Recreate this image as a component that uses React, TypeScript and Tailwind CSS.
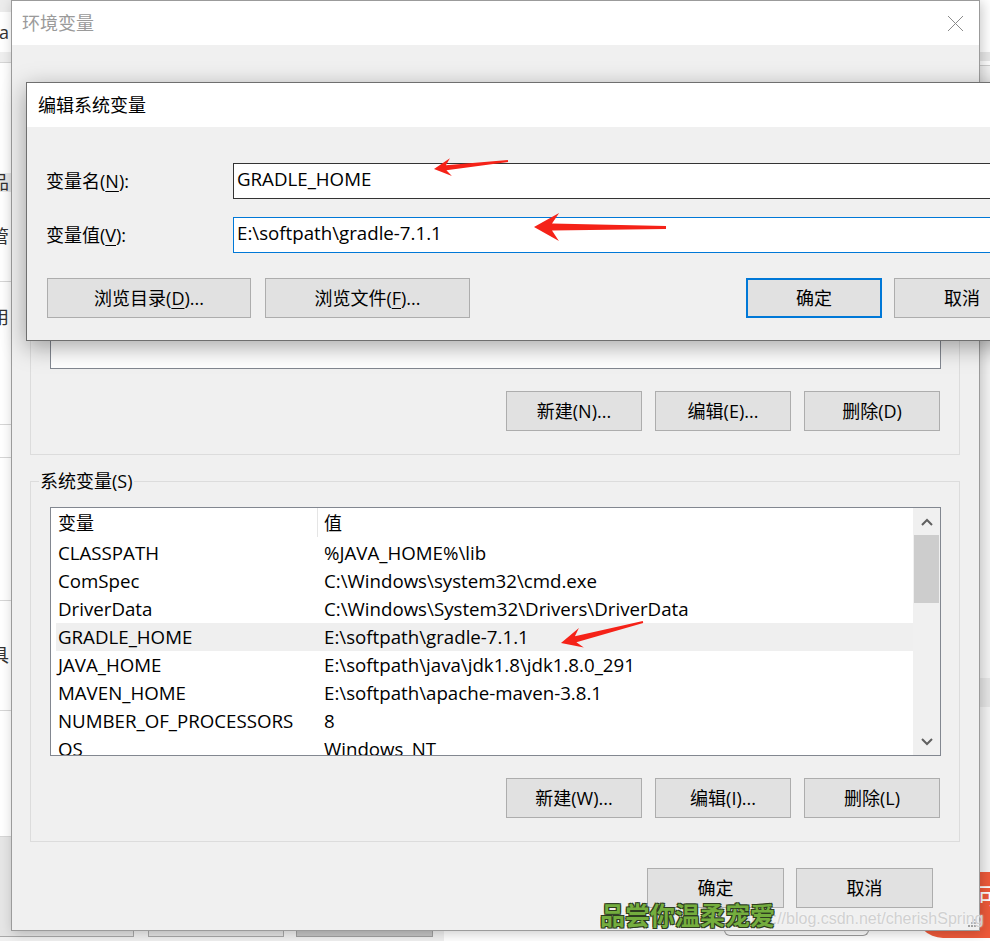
import React from 'react';

type Pt = [number, number];

// red annotation arrow: tip, tail, head length / half width, shaft widths
function arrowPoints(tip: Pt, tail: Pt, L: number, W: number, w1: number, w2: number) {
  const dx = tail[0] - tip[0];
  const dy = tail[1] - tip[1];
  const len = Math.hypot(dx, dy);
  const ux = dx / len;
  const uy = dy / len;
  const nx = -uy;
  const ny = ux;
  const at = (t: number, s: number) =>
    `${(tip[0] + ux * t + nx * s).toFixed(1)},${(tip[1] + uy * t + ny * s).toFixed(1)}`;
  return [
    at(0, 0),
    at(L, W),
    at(L * 0.72, w1),
    `${(tail[0] + nx * w2).toFixed(1)},${(tail[1] + ny * w2).toFixed(1)}`,
    `${(tail[0] - nx * w2).toFixed(1)},${(tail[1] - ny * w2).toFixed(1)}`,
    at(L * 0.72, -w1),
    at(L, -W),
  ].join(' ');
}

const rows: [string, string][] = [
  ['CLASSPATH', '%JAVA_HOME%\\lib'],
  ['ComSpec', 'C:\\Windows\\system32\\cmd.exe'],
  ['DriverData', 'C:\\Windows\\System32\\Drivers\\DriverData'],
  ['GRADLE_HOME', 'E:\\softpath\\gradle-7.1.1'],
  ['JAVA_HOME', 'E:\\softpath\\java\\jdk1.8\\jdk1.8.0_291'],
  ['MAVEN_HOME', 'E:\\softpath\\apache-maven-3.8.1'],
  ['NUMBER_OF_PROCESSORS', '8'],
  ['OS', 'Windows_NT'],
];

function Btn({ children, className = '' }: { children: React.ReactNode; className?: string }) {
  return (
    <div
      className={`flex h-[40px] items-center justify-center border border-[#adadad] bg-[#e1e1e1] ${className}`}
    >
      {children}
    </div>
  );
}

function BgText({ h, text, bg = 'bg-white', line = false }: { h: string; text?: string; bg?: string; line?: boolean }) {
  return (
    <div className={`flex w-full items-center justify-end overflow-hidden pr-[3px] ${h} ${bg} ${line ? 'border-b border-[#d6d6d6]' : ''}`}>
      {text && <span className="whitespace-nowrap text-[18px] text-[#333]">{text}</span>}
    </div>
  );
}

export default function App() {
  return (
    <div className="relative h-[941px] w-[990px] overflow-hidden bg-white font-['Open_Sans','Noto_Sans_CJK_SC',sans-serif] text-[18px] text-black">
      {/* 뒤쪽 창 - 왼쪽 가장자리 */}
      <div className="absolute left-0 top-0 flex h-full w-[12px] flex-col">
        <BgText h="h-[12px]" bg="bg-[#ececec]" />
        <BgText h="h-[40px]" text="ea" />
        <BgText h="h-[11px]" bg="bg-[#efefef]" line />
        <BgText h="h-[110px]" />
        <BgText h="h-[19px]" bg="bg-[#e9e9e9]" text="品" />
        <BgText h="h-[90px]" text="管" line />
        <BgText h="h-[70px]" text="用" />
        <BgText h="h-[73px]" line />
        <BgText h="h-[33px]" line />
        <BgText h="h-[143px]" line />
        <BgText h="h-[110px]" text="具" line />
        <BgText h="h-[126px]" line />
        <BgText h="h-[104px]" bg="bg-[#e6e6e6]" />
      </div>

      {/* 뒤쪽 창 - 오른쪽 가장자리 */}
      <div className="absolute right-0 top-0 flex h-full w-[12px] flex-col bg-[#f4f4f4]">
        <div className="h-[52px] bg-white" />
        <div className="h-[9px] bg-[#e8e8e8]" />
        <div className="h-[5px] border-b border-[#cfcfcf] bg-white" />
        <div className="h-[612px]" />
        <div className="h-[29px] bg-[#e6e6e6]" />
      </div>

      {/* 뒤쪽 창 - 아래 버튼 */}
      <div className="absolute bottom-0 left-0 flex h-[11px] w-full items-start bg-[#f0f0f0]">
        <div className="h-[7px] w-[134px] border-b border-r border-[#a8a8a8] bg-[#e4e4e4]" />
        <div className="ml-[14px] h-[7px] w-[136px] border-x border-b border-[#a8a8a8] bg-[#e4e4e4]" />
        <div className="ml-[12px] h-[7px] w-[137px] border-x border-b border-[#a0a0a0] bg-[#c4c4c4]" />
        <div className="ml-[11px] h-full flex-1 bg-white">
          <div className="ml-[280px] h-[6px] w-[145px] rounded-b-[14px] border-x border-b border-[#9c9c9c]" />
        </div>
      </div>

      {/* 주황 배지 */}
      <div className="absolute left-[915px] top-[872px] flex h-[66px] w-[100px] items-start justify-end rounded-bl-[28px] bg-[#ef5a3a] pr-[14px] pt-[6px]">
        <span className="text-[24px] text-white">可</span>
      </div>

      {/* 환경 변수 창 */}
      <div className="absolute left-[11px] top-0 flex h-[931px] w-[969px] flex-col border border-[#9b9b9b] bg-[#f0f0f0] shadow-[2px_2px_12px_rgba(0,0,0,0.22)]">
        <div className="flex h-[44px] items-center justify-between bg-white pl-[10px] pr-[15px]">
          <span className="text-[#9a9a9a]">环境变量</span>
          <svg width="17" height="17" viewBox="0 0 17 17">
            <path d="M1 1L16 16M16 1L1 16" stroke="#8a8a8a" strokeWidth="1" />
          </svg>
        </div>

        <div className="flex flex-1 flex-col px-[18px]">
          {/* 사용자 변수 (편집 창 뒤에 가려짐) */}
          <div className="relative mt-[49px] h-[361px] w-[930px] border border-[#dcdcdc] pl-[19px] pt-[25px]">
            <div className="h-[249px] w-[891px] border border-[#828790] bg-white" />
            <div className="mt-[22px] flex justify-end gap-[13px] pr-[19px]">
              <Btn className="w-[136px]">新建(N)...</Btn>
              <Btn className="w-[136px]">编辑(E)...</Btn>
              <Btn className="w-[136px]">删除(D)</Btn>
            </div>
          </div>

          {/* 시스템 변수 */}
          <div className="relative mt-[26px] h-[361px] w-[930px] border border-[#dcdcdc] pl-[19px] pt-[25px]">
            <span className="absolute left-[8px] top-[-14px] bg-[#f0f0f0] px-[1px] leading-[26px]">
              系统变量(S)
            </span>
            <div className="flex h-[249px] w-[891px] border border-[#828790] bg-white">
              <div className="flex-1 overflow-hidden pl-[5px]">
                <div className="flex h-[31px] items-center">
                  <span className="w-[261px] pl-[2px]">变量</span>
                  <span className="h-[29px] w-[1px] self-start bg-[#e5e5e5]" />
                  <span className="pl-[6px]">值</span>
                </div>
                {rows.map(([k, v]) => (
                  <div
                    key={k}
                    className={`flex h-[28px] items-center whitespace-nowrap text-[18.7px] ${k === 'GRADLE_HOME' ? 'bg-[#efefef]' : ''}`}
                  >
                    <span className="w-[262px] pl-[2px]">{k}</span>
                    <span className="pl-[6px]">{v}</span>
                  </div>
                ))}
              </div>
              <div className="flex w-[27px] flex-col bg-[#f0f0f0]">
                <div className="flex h-[27px] items-center justify-center">
                  <svg width="12" height="8" viewBox="0 0 12 8">
                    <path d="M1 7L6 2L11 7" fill="none" stroke="#606060" strokeWidth="2" />
                  </svg>
                </div>
                <div className="mx-[1px] h-[68px] bg-[#cdcdcd]" />
                <div className="flex-1" />
                <div className="flex h-[27px] items-center justify-center">
                  <svg width="12" height="8" viewBox="0 0 12 8">
                    <path d="M1 1L6 6L11 1" fill="none" stroke="#606060" strokeWidth="2" />
                  </svg>
                </div>
              </div>
            </div>
            <div className="mt-[22px] flex justify-end gap-[13px] pr-[19px]">
              <Btn className="w-[136px]">新建(W)...</Btn>
              <Btn className="w-[136px]">编辑(I)...</Btn>
              <Btn className="w-[136px]">删除(L)</Btn>
            </div>
          </div>

          <div className="mt-[26px] flex justify-end gap-[12px] pr-[28px]">
            <Btn className="w-[137px]">确定</Btn>
            <Btn className="w-[137px]">取消</Btn>
          </div>
        </div>

        {/* 크기 조절 그립 */}
        <svg className="absolute bottom-[2px] right-[2px]" width="10" height="10" viewBox="0 0 10 10">
          <rect x="7" y="1" width="2" height="2" fill="#a0a0a0" />
          <rect x="4" y="4" width="2" height="2" fill="#a0a0a0" />
          <rect x="7" y="4" width="2" height="2" fill="#a0a0a0" />
          <rect x="1" y="7" width="2" height="2" fill="#a0a0a0" />
          <rect x="4" y="7" width="2" height="2" fill="#a0a0a0" />
          <rect x="7" y="7" width="2" height="2" fill="#a0a0a0" />
        </svg>
      </div>

      {/* 편집 시스템 변수 창 */}
      <div className="absolute left-[26px] top-[82px] flex h-[259px] w-[1040px] flex-col border border-[#6f6f6f] bg-[#f0f0f0] shadow-[0_6px_22px_rgba(0,0,0,0.35)]">
        <div className="flex h-[44px] items-center bg-white pl-[11px]">编辑系统变量</div>
        <div className="flex flex-col pl-[19px] pt-[36px]">
          <div className="flex items-center">
            <span className="w-[187px]">
              变量名(<span className="underline underline-offset-[3px]">N</span>):
            </span>
            <div className="flex h-[36px] flex-1 items-center border border-[#333333] bg-white pb-[3px] pl-[3px] text-[18.7px]">
              GRADLE_HOME
            </div>
          </div>
          <div className="mt-[18px] flex items-center">
            <span className="w-[187px]">
              变量值(<span className="underline underline-offset-[3px]">V</span>):
            </span>
            <div className="flex h-[36px] flex-1 items-center border border-[#0078d7] bg-white pb-[3px] pl-[3px] text-[18.7px]">
              E:\softpath\gradle-7.1.1
            </div>
          </div>
          <div className="ml-[1px] mt-[25px] flex">
            <Btn className="w-[204px]">
              浏览目录(<span className="underline underline-offset-[3px]">D</span>)...
            </Btn>
            <Btn className="ml-[14px] w-[205px]">
              浏览文件(<span className="underline underline-offset-[3px]">F</span>)...
            </Btn>
            <div className="ml-[276px] flex h-[40px] w-[136px] items-center justify-center border-2 border-[#0078d7] bg-[#e1e1e1]">
              确定
            </div>
            <Btn className="ml-[12px] w-[136px]">取消</Btn>
          </div>
        </div>
      </div>

      {/* 빨간 화살표 */}
      <svg className="pointer-events-none absolute left-0 top-0" width="990" height="941">
        <polygon points={arrowPoints([434, 169], [508, 161], 17, 9, 2.5, 1)} fill="#f52218" />
        <polygon points={arrowPoints([534, 227], [666, 227.5], 25, 14, 3.5, 1.5)} fill="#f52218" />
        <polygon points={arrowPoints([561, 643], [643, 622], 21, 10, 3, 1)} fill="#f52218" />
      </svg>

      {/* 워터마크 */}
      <span className="absolute left-[738px] top-[907px] whitespace-nowrap font-['Liberation_Sans',sans-serif] text-[16px] text-[#d0d0d0] [text-shadow:0_0_2px_rgba(255,255,255,0.9)]">
        https://blog.csdn.net/cherishSpring
      </span>
      <span className="absolute left-[600px] top-[898px] whitespace-nowrap font-['Noto_Sans_CJK_SC',sans-serif] text-[25px] font-bold leading-[32px] text-[#74ad3e] [text-shadow:1px_1px_0_#2e3d1f,-1px_-1px_0_#2e3d1f,1px_-1px_0_#2e3d1f,-1px_1px_0_#2e3d1f]">
        品尝你温柔宠爱
      </span>
    </div>
  );
}
